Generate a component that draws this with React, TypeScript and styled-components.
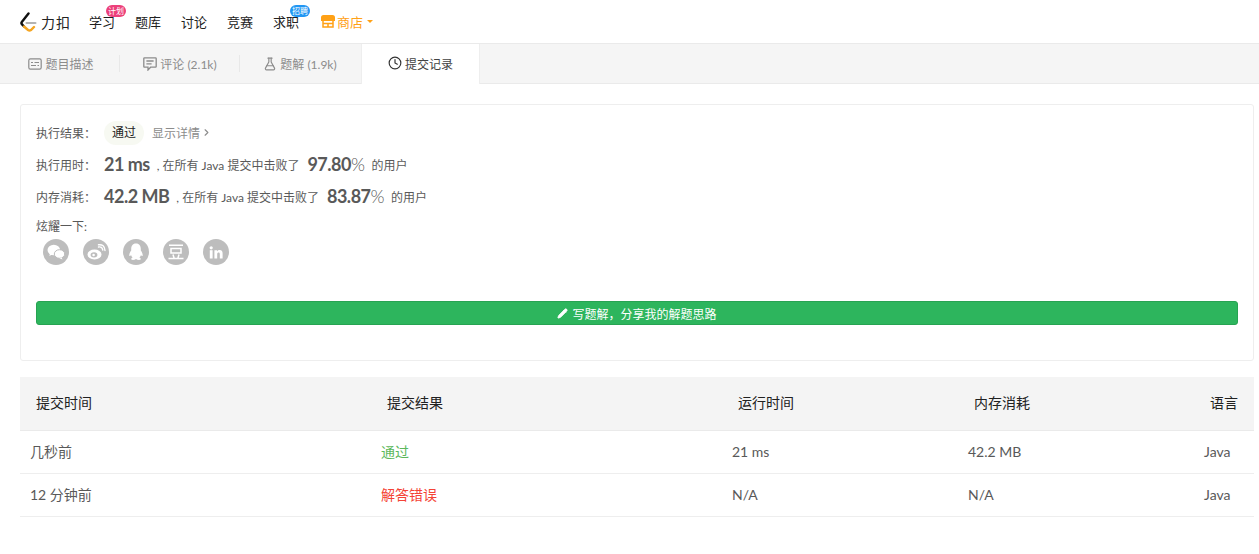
import React from "react";
import styled, { createGlobalStyle } from "styled-components";
import { ChevronRight, Clock, FlaskConical, Pencil } from "lucide-react";

const sans = `"Lato", "Noto Sans CJK SC", sans-serif`;

const Global = createGlobalStyle`
  html, body { margin: 0; padding: 0; background: #fff; }
  body { font-family: ${sans}; color: #424242; font-size: 12px; }
  * { box-sizing: border-box; }
`;

const Page = styled.div`
  width: 1259px;
  height: 554px;
  overflow: hidden;
`;

const Nav = styled.nav`
  height: 44px;
  display: flex;
  align-items: center;
  padding-left: 19px;
  background: #fff;
  border-bottom: 1px solid #eaeaea;
`;

const Logo = styled.div`
  display: flex;
  align-items: center;
  width: 70px;
  gap: 2px;
  font-size: 14px;
  font-weight: 400;
  color: #222;
  letter-spacing: 1px;
`;

const NavItem = styled.a<{ $accent?: boolean }>`
  position: relative;
  font-size: 13px;
  line-height: 16px;
  margin-right: 20px;
  color: ${(p) => (p.$accent ? "#ffa116" : "#212121")};
  display: flex;
  align-items: center;
  gap: 2px;
`;

const StoreItem = styled(NavItem)`
  margin-left: 2px;
`;

const Badge = styled.span<{ $color: string }>`
  position: absolute;
  right: -11px;
  top: -9px;
  height: 12px;
  width: 20px;
  border-radius: 6px;
  background: ${(p) => p.$color};
  color: #fff;
  font-size: 8px;
  line-height: 12px;
  text-align: center;
  white-space: nowrap;
`;

const Caret = styled.span`
  width: 0;
  height: 0;
  margin-left: 2px;
  border-left: 3px solid transparent;
  border-right: 3px solid transparent;
  border-top: 3px solid #ffa116;
`;

const Tabs = styled.div`
  height: 40px;
  display: flex;
  background: #f5f5f5;
  border-bottom: 1px solid #eaeaea;
`;

const Tab = styled.div<{ $active?: boolean; $divider?: boolean }>`
  position: relative;
  width: ${(p) => (p.$active ? "119px" : "120px")};
  height: ${(p) => (p.$active ? "40px" : "39px")};
  display: flex;
  align-items: center;
  justify-content: center;
  gap: 3px;
  font-size: 12px;
  color: ${(p) => (p.$active ? "#424242" : "#8c8c8c")};
  background: ${(p) => (p.$active ? "#fff" : "transparent")};
  ${(p) => p.$active && "border-left: 1px solid #eee; border-right: 1px solid #eee; margin-left: 1px; padding-bottom: 2px;"}
  ${(p) =>
    p.$divider &&
    `&::after { content: ""; position: absolute; right: 0; top: 11px; height: 17px; border-right: 1px solid #e8e8e8; }`}
`;

const FirstTab = styled(Tab)`
  padding-left: 2px;
`;

const Content = styled.div`
  padding: 20px 5px 0 20px;
`;

const Card = styled.section`
  height: 257px;
  border: 1px solid #eee;
  border-radius: 3px;
  padding: 16px 15px 0;
  display: flex;
  flex-direction: column;
`;

const Row = styled.div<{ $h: number; $top?: number }>`
  height: ${(p) => p.$h}px;
  margin-top: ${(p) => p.$top ?? 0}px;
  display: flex;
  align-items: center;
  white-space: nowrap;
`;

const Label = styled.span<{ $lift?: boolean }>`
  width: 68px;
  font-size: 12px;
  color: #595959;
  ${(p) => p.$lift && "padding-bottom: 2px;"}
`;

const Status = styled.span`
  height: 24px;
  padding: 0 8px;
  border-radius: 12px;
  background: #f7f9f2;
  color: #212121;
  line-height: 24px;
  font-size: 12px;
  margin-right: 8px;
`;

const Details = styled.span`
  display: flex;
  align-items: center;
  gap: 1px;
  color: #8c8c8c;
  font-size: 12px;
  padding-bottom: 2px;
`;

const Big = styled.span`
  font-size: 18px;
  font-weight: 700;
  color: #595959;
  margin-right: 7px;
  letter-spacing: -0.5px;
`;

const Percent = styled.span`
  font-size: 18px;
  font-weight: 700;
  color: #595959;
  margin: 0 7px 0 8px;
  letter-spacing: -0.5px;
`;

const Thin = styled.span`
  font-weight: 300;
`;

const Small = styled.span`
  font-size: 12px;
  color: #595959;
`;

const Shares = styled.div`
  display: flex;
  gap: 14px;
  padding-left: 7px;
  margin-top: 4px;
`;

const Share = styled.span`
  width: 26px;
  height: 26px;
  border-radius: 50%;
  background: #bdbdbd;
  display: flex;
  align-items: center;
  justify-content: center;
  color: #fff;
`;

const Write = styled.button`
  margin-top: 36px;
  height: 24px;
  border: 1px solid #27a352;
  border-radius: 3px;
  background: #2db55d;
  color: #fff;
  font-family: ${sans};
  font-size: 12px;
  display: flex;
  align-items: center;
  justify-content: center;
  gap: 4px;
  padding: 0;
`;

const Grid = "351px 351px 236px 236px 60px";

const THead = styled.div`
  margin-top: 16px;
  height: 54px;
  display: grid;
  grid-template-columns: ${Grid};
  align-items: center;
  padding-bottom: 3px;
  background: #f4f4f4;
  border-bottom: 1px solid #eaeaea;
  font-size: 14px;
  color: #212121;
`;

const Th = styled.div`
  padding-left: 16px;
  white-space: nowrap;
`;

const TRow = styled.div`
  height: 43px;
  display: grid;
  grid-template-columns: ${Grid};
  align-items: center;
  padding-bottom: 1px;
  border-bottom: 1px solid #eee;
  font-size: 14px;
  color: #595959;
`;

const Td = styled.div<{ $color?: string; $cjk?: boolean }>`
  padding-left: 10px;
  white-space: nowrap;
  color: ${(p) => p.$color ?? "inherit"};
  ${(p) => p.$cjk && "padding-bottom: 2px;"}
`;

const LogoMark = () => (
  <svg width="20" height="20" viewBox="0 0 20 20" fill="none">
    <path d="M9.5 1.5 L2.8 10 Q2 11 2.8 12.2 L5 14.5" stroke="#111" strokeWidth="2.4" strokeLinecap="round" strokeLinejoin="round" />
    <path d="M5 14.5 L9 18 Q10.5 19 12 18 L15 15" stroke="#f5a623" strokeWidth="2.4" strokeLinecap="round" />
    <path d="M7.5 11 H16.5" stroke="#b3b3b3" strokeWidth="2" strokeLinecap="round" />
  </svg>
);

const StoreIcon = () => (
  <svg width="14" height="13" viewBox="0 0 14 13" fill="none" stroke="#ffa116" strokeWidth="2">
    <path d="M1 2.5 Q1 1 2.5 1 H11.5 Q13 1 13 2.5 V5 H1 Z" fill="#ffa116" />
    <path d="M2 5 V12 H12 V5 M2 8.5 H12 M7 8.5 V12" strokeWidth="1.5" />
  </svg>
);

const DescIcon = () => (
  <svg width="14" height="12" viewBox="0 0 14 12" fill="none" stroke="#8c8c8c" strokeWidth="1.2">
    <rect x="0.8" y="0.8" width="12.4" height="10.4" rx="1.6" />
    <path d="M3 4.5 H5 M6.5 4.5 H11 M3 7.5 H8 M9.5 7.5 H11" />
  </svg>
);

const CommentIcon = () => (
  <svg width="14" height="14" viewBox="0 0 14 14" fill="none" stroke="#8c8c8c" strokeWidth="1.3">
    <path d="M1.6 0.8 H12.4 Q13.2 0.8 13.2 1.6 V9.4 Q13.2 10.2 12.4 10.2 H7.6 L5 13 V10.2 H1.6 Q0.8 10.2 0.8 9.4 V1.6 Q0.8 0.8 1.6 0.8 Z" />
    <path d="M3.4 4 H10.6 M3.4 6.8 H8.6" />
  </svg>
);

const WeChat = () => (
  <svg width="18" height="16" viewBox="0 0 18 16" fill="#fff">
    <ellipse cx="6.8" cy="6" rx="6.3" ry="5.2" />
    <path d="M3 9 L2.4 12 L6 10 Z" />
    <ellipse cx="12.5" cy="10" rx="5.2" ry="4.3" stroke="#bdbdbd" strokeWidth="1" />
    <path d="M14.5 13.5 L15.5 15.5 L12.5 14.2 Z" />
  </svg>
);

const Weibo = () => (
  <svg width="19" height="16" viewBox="0 0 19 16" fill="none">
    <ellipse cx="7.5" cy="10.5" rx="7" ry="5" fill="#fff" />
    <ellipse cx="7" cy="10.8" rx="3.4" ry="2.6" fill="#bdbdbd" />
    <circle cx="6.6" cy="11" r="1.3" fill="#fff" />
    <path d="M11.5 3 Q15 2.2 15.8 6 M11.5 0.8 Q17.5 0 18 6.5" stroke="#fff" strokeWidth="1.4" strokeLinecap="round" />
  </svg>
);

const QQ = () => (
  <svg width="16" height="18" viewBox="0 0 16 18" fill="#fff">
    <path d="M8 0.5 C4.5 0.5 3.2 3 3.2 6 L3.2 7.5 C2 9.2 1 11 1.4 13 C2 13.3 2.6 12.6 3 12 C3.3 13.2 4 14 4.6 14.6 C3.6 15 3 15.6 3.4 16.4 C4 17.2 6.6 17 8 16 C9.4 17 12 17.2 12.6 16.4 C13 15.6 12.4 15 11.4 14.6 C12 14 12.7 13.2 13 12 C13.4 12.6 14 13.3 14.6 13 C15 11 14 9.2 12.8 7.5 L12.8 6 C12.8 3 11.5 0.5 8 0.5 Z" />
  </svg>
);

const Douban = () => (
  <svg width="16" height="16" viewBox="0 0 16 16" fill="none" stroke="#fff" strokeWidth="1.5">
    <path d="M1 1.2 H15 M3 4.5 H13 V9 H3 Z M0.5 14.5 H15.5 M5 10.5 L6.2 14.5 M11 10.5 L9.8 14.5" />
  </svg>
);

const LinkedIn = () => (
  <svg width="14" height="13" viewBox="0 0 14 13" fill="#fff">
    <rect x="0.8" y="4.2" width="2.8" height="8.3" />
    <circle cx="2.2" cy="1.8" r="1.6" />
    <path d="M5.4 4.2 H8 V5.4 C8.6 4.5 9.6 4 10.7 4 C12.9 4 13.6 5.4 13.6 7.6 V12.5 H10.8 V8 C10.8 7 10.4 6.4 9.6 6.4 C8.7 6.4 8.2 7 8.2 8 V12.5 H5.4 Z" />
  </svg>
);

export default function App() {
  return (
    <Page>
      <Global />
      <Nav>
        <Logo>
          <LogoMark />
          力扣
        </Logo>
        <NavItem>
          学习
          <Badge $color="#ec407a">计划</Badge>
        </NavItem>
        <NavItem>题库</NavItem>
        <NavItem>讨论</NavItem>
        <NavItem>竞赛</NavItem>
        <NavItem>
          求职
          <Badge $color="#2196f3">招聘</Badge>
        </NavItem>
        <StoreItem $accent>
          <StoreIcon />
          商店
          <Caret />
        </StoreItem>
      </Nav>
      <Tabs>
        <FirstTab $divider>
          <DescIcon />
          题目描述
        </FirstTab>
        <Tab $divider>
          <CommentIcon />
          评论 (2.1k)
        </Tab>
        <Tab>
          <FlaskConical size={14} />
          题解 (1.9k)
        </Tab>
        <Tab $active>
          <Clock size={14} color="#333" />
          提交记录
        </Tab>
      </Tabs>
      <Content>
        <Card>
          <Row $h={24}>
            <Label $lift>执行结果：</Label>
            <Status>通过</Status>
            <Details>
              显示详情
              <ChevronRight size={11} strokeWidth={2.5} />
            </Details>
          </Row>
          <Row $h={32} $top={3}>
            <Label>执行用时：</Label>
            <Big>21 ms</Big>
            <Small>, 在所有 Java 提交中击败了</Small>
            <Percent>
              97.80<Thin>%</Thin>
            </Percent>
            <Small>的用户</Small>
          </Row>
          <Row $h={32}>
            <Label>内存消耗：</Label>
            <Big>42.2 MB</Big>
            <Small>, 在所有 Java 提交中击败了</Small>
            <Percent>
              83.87<Thin>%</Thin>
            </Percent>
            <Small>的用户</Small>
          </Row>
          <Row $h={20} $top={3}>
            <Small>炫耀一下:</Small>
          </Row>
          <Shares>
            <Share><WeChat /></Share>
            <Share><Weibo /></Share>
            <Share><QQ /></Share>
            <Share><Douban /></Share>
            <Share><LinkedIn /></Share>
          </Shares>
          <Write>
            <Pencil size={11} fill="#fff" />
            写题解，分享我的解题思路
          </Write>
        </Card>
        <THead>
          <Th>提交时间</Th>
          <Th>提交结果</Th>
          <Th>运行时间</Th>
          <Th>内存消耗</Th>
          <Th>语言</Th>
        </THead>
        <TRow>
          <Td $cjk>几秒前</Td>
          <Td $cjk $color="#5cb85c">通过</Td>
          <Td>21 ms</Td>
          <Td>42.2 MB</Td>
          <Td>Java</Td>
        </TRow>
        <TRow>
          <Td $cjk>12 分钟前</Td>
          <Td $cjk $color="#f44336">解答错误</Td>
          <Td>N/A</Td>
          <Td>N/A</Td>
          <Td>Java</Td>
        </TRow>
      </Content>
    </Page>
  );
}
